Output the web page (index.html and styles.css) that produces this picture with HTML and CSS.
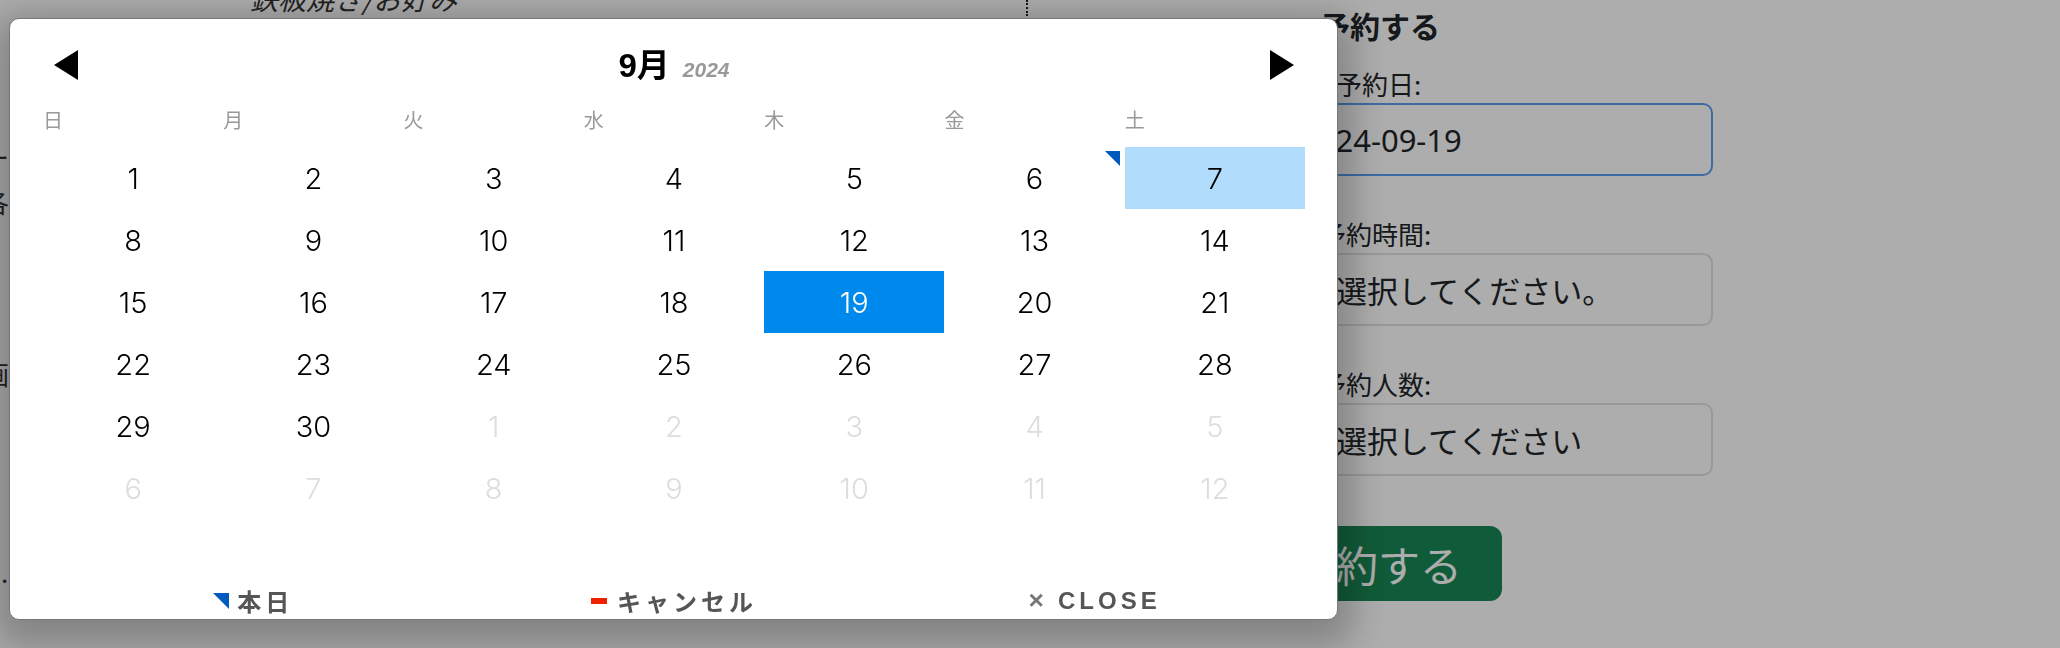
FILE: index.html
```html
<!DOCTYPE html>
<html lang="ja">

<head>
    <meta charset="utf-8">
    <title>予約する</title>
    <link rel="stylesheet" href="styles.css">
</head>

<body>
    <div class="page">
        <div class="side">
            <p class="side-a">ー</p>
            <p class="side-b">各</p>
            <p class="side-c">画</p>
            <p class="side-d">…</p>
        </div>
        <div class="main">
            <div class="main-top">
                <span class="cat">鉄板焼き/お好み</span>
                <span class="dots"></span>
            </div>
        </div>
        <form class="reserve">
            <h2>予約する</h2>
            <div class="field first">
                <label>予約日:</label>
                <input class="date focused" type="text" value="2024-09-19">
            </div>
            <div class="field">
                <label>予約時間:</label>
                <input class="choice" type="text" value="選択してください。" readonly>
            </div>
            <div class="field">
                <label>予約人数:</label>
                <input class="choice" type="text" value="選択してください" readonly>
            </div>
            <button type="button" class="submit">予約する</button>
        </form>
    </div>

    <!-- 日付ピッカー（オーバーレイ） -->
    <div class="picker">
        <div class="picker-frame">
            <div class="picker-header">
                <span class="nav prev"></span>
                <div class="title">
                    <span class="month">9月</span>
                    <span class="year">2024</span>
                </div>
                <span class="nav next"></span>
            </div>
            <div class="weekdays">
                <span>日</span><span>月</span><span>火</span><span>水</span><span>木</span><span>金</span><span>土</span>
            </div>
            <div class="days">
                <span>1</span><span>2</span><span>3</span><span>4</span><span>5</span><span class="today">6</span><span class="hover">7</span>
                <span>8</span><span>9</span><span>10</span><span>11</span><span>12</span><span>13</span><span>14</span>
                <span>15</span><span>16</span><span>17</span><span>18</span><span class="selected">19</span><span>20</span><span>21</span>
                <span>22</span><span>23</span><span>24</span><span>25</span><span>26</span><span>27</span><span>28</span>
                <span>29</span><span>30</span><span class="out">1</span><span class="out">2</span><span class="out">3</span><span class="out">4</span><span class="out">5</span>
                <span class="out">6</span><span class="out">7</span><span class="out">8</span><span class="out">9</span><span class="out">10</span><span class="out">11</span><span class="out">12</span>
            </div>
            <div class="picker-footer">
                <span class="btn btn-today">本日</span>
                <span class="btn btn-clear">キャンセル</span>
                <span class="btn btn-close">CLOSE</span>
            </div>
        </div>
    </div>
</body>

</html>
```

FILE: styles.css
```css
html,
body {
    margin: 0;
    padding: 0;
    width: 100%;
    height: 100%;
    overflow: hidden;
}

body {
    background-color: #fff;
    color: #212529;
    font-family: "Noto Sans CJK JP", sans-serif;
}

.page {
    display: grid;
    grid-template-columns: 9px 1245px 459px;
}

/* 左端のはみ出した文字 */
.side {
    width: 9px;
    overflow: hidden;
    direction: rtl;
    white-space: nowrap;
    font-size: 26px;
    line-height: 30px;
    color: #333;
}

.side p {
    margin: 0;
}

.side-a {
    padding-top: 142px;
}

.side-b {
    padding-top: 15px;
}

.side-c {
    padding-top: 142px;
}

.side-d {
    padding-top: 176px;
}

.main-top {
    display: grid;
    grid-template-columns: 241px 776px 2px;
}

.cat {
    grid-column: 2;
    margin-top: -17px;
    font-size: 28px;
    line-height: 30px;
    font-style: italic;
    color: #333;
}

.dots {
    grid-column: 3;
    height: 16px;
    border-left: 2px dotted #222;
}

/* 予約フォーム */
.reserve {
    display: flex;
    flex-direction: column;
    align-items: flex-start;
    padding-top: 7px;
}

.reserve h2 {
    margin: 0;
    padding-left: 66px;
    font-size: 30px;
    line-height: 36px;
    font-weight: 700;
}

.field {
    display: flex;
    flex-direction: column;
    gap: 3px;
    width: 100%;
    margin-bottom: 42px;
}

.field.first {
    margin-top: 25px;
}

.field label {
    padding-left: 66px;
    font-size: 26px;
    line-height: 32px;
}

.field.first label {
    padding-left: 82px;
}

.field input {
    box-sizing: border-box;
    width: 100%;
    height: 73px;
    border: 2px solid #dee2e6;
    border-radius: 10px;
    background: #fff;
    color: #212529;
    font-family: "Noto Sans CJK JP", sans-serif;
    font-size: 31px;
    outline: none;
}

.field input.focused {
    border-color: #5c9ef2;
}

.field input.date {
    padding-left: 44px;
    font-family: "Noto Sans", "Noto Sans CJK JP", sans-serif;
    font-size: 31px;
}

.field input.choice {
    padding-left: 80px;
}

.submit {
    margin-top: 8px;
    width: 248px;
    height: 75px;
    border: 0;
    border-radius: 12px;
    background: #198754;
    color: #fff;
    font-family: "Noto Sans CJK JP", sans-serif;
    font-size: 42px;
}

/* ピッカー */
.picker {
    position: fixed;
    top: 0;
    left: 0;
    right: 0;
    bottom: 0;
    background: rgba(0, 0, 0, 0.32);
}

.picker-frame {
    box-sizing: border-box;
    display: flex;
    flex-direction: column;
    width: 1329px;
    height: 602px;
    margin: 18px 0 0 9px;
    padding: 0 32px 0 33px;
    background: #fff;
    border: 1px solid #777;
    border-radius: 10px;
    box-shadow: 0 12px 36px 16px rgba(0, 0, 0, 0.24);
    font-family: Inter, "Noto Sans CJK JP", sans-serif;
    color: #000;
}

.picker-header {
    display: flex;
    align-items: center;
    justify-content: space-between;
    height: 38px;
    margin-top: 27px;
    padding: 0 11px;
}

.nav {
    width: 0;
    height: 0;
    border-top: 15px solid transparent;
    border-bottom: 15px solid transparent;
}

.nav.prev {
    border-right: 24px solid #000;
}

.nav.next {
    border-left: 24px solid #000;
}

.title {
    display: flex;
    align-items: baseline;
    gap: 13px;
    padding-bottom: 5px;
    font-family: "Liberation Sans", "Noto Sans CJK JP", sans-serif;
}

.month {
    font-size: 33px;
    font-weight: 700;
}

.year {
    font-size: 21px;
    font-weight: 700;
    font-style: italic;
    color: #999;
}

.weekdays {
    display: grid;
    grid-template-columns: repeat(7, 1fr);
    margin-top: 24px;
    font-family: "Noto Sans CJK JP", sans-serif;
    font-size: 20px;
    line-height: 24px;
    color: #999;
}

.days {
    display: grid;
    grid-template-columns: repeat(7, 1fr);
    grid-auto-rows: 62px;
    margin-top: 15px;
    font-size: 29px;
    font-weight: 300;
}

.days span {
    display: flex;
    align-items: center;
    justify-content: center;
}

.days .out {
    color: #ddd;
}

.days .hover {
    background: #b1dcfb;
}

.days .selected {
    background: #0089ec;
    color: #fff;
}

.days .today {
    position: relative;
}

.days .today::before {
    content: "";
    position: absolute;
    top: 4px;
    right: 5px;
    border-top: 15px solid #0059bc;
    border-left: 15px solid transparent;
}

.picker-footer {
    display: grid;
    grid-template-columns: repeat(3, 1fr);
    margin-top: auto;
    margin-bottom: 6px;
    height: 30px;
    font-family: "Liberation Sans", "Noto Sans CJK JP", sans-serif;
    font-size: 24px;
    font-weight: 700;
    letter-spacing: 4px;
    color: #555;
}

.btn {
    display: flex;
    align-items: center;
    justify-content: center;
}

.btn-today::before {
    content: "";
    margin-right: 8px;
    border-top: 16px solid #0059bc;
    border-left: 16px solid transparent;
}

.btn-clear::before {
    content: "";
    width: 16px;
    height: 6px;
    margin-right: 10px;
    background: #e20;
}

.btn-close::before {
    content: "\00D7";
    margin-right: 10px;
    font-size: 1.1em;
    color: #777;
}
```
